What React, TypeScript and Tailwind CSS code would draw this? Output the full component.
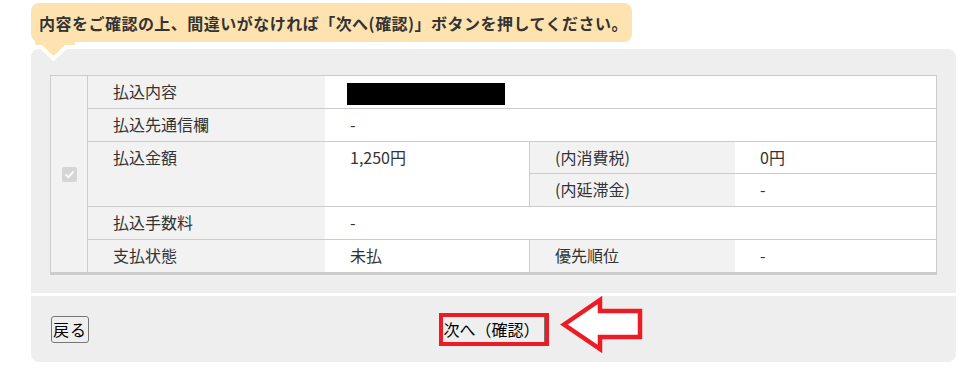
import React from "react";

const font = { fontFamily: '"Noto Sans CJK JP", "Noto Sans", sans-serif' };

function Label({ children, className = "" }: { children: React.ReactNode; className?: string }) {
  return (
    <div className={`bg-[#f2f2f2] pl-[25px] leading-[30px] border-[#cccccc] ${className}`}>{children}</div>
  );
}

function Value({ children, className = "" }: { children: React.ReactNode; className?: string }) {
  return <div className={`bg-white pl-[25px] leading-[30px] border-[#cccccc] ${className}`}>{children}</div>;
}

export default function App() {
  return (
    <div className="w-[971px] h-[377px] bg-white text-[#333333] text-[16px]" style={font}>
      <div className="ml-[31px] pt-[3px] w-[925px]">
        {/* speech bubble */}
        <div className="relative z-10 w-[601px] h-[39px] rounded-[8px] bg-[#fee3b1] flex items-center pl-[8px] font-bold text-[16px] tracking-[0.03em] whitespace-nowrap">
          内容をご確認の上、間違いがなければ「次へ(確認)」ボタンを押してください。
          <svg
            className="absolute left-[4px] top-[36px]"
            width="40"
            height="30"
            viewBox="0 0 40 30"
          >
            <polygon
              points="6,5 31,5 18.5,17"
              fill="#fee3b1"
              stroke="#ffffff"
              strokeWidth="8"
              strokeLinejoin="miter"
              paintOrder="stroke"
            />
            <rect x="0" y="0" width="40" height="6" fill="#fee3b1" />
          </svg>
        </div>

        {/* panel */}
        <div className="mt-[7px]">
          <div className="bg-[#eeeeee] rounded-t-[8px] pt-[26px] px-[19px] pb-[18px]">
            <div className="grid grid-cols-[37px_237px_205px_205px_1fr] grid-rows-[33px_33px_32px_33px_33px_32px] border border-b-[3px] border-[#cccccc] bg-white">
              {/* checkbox column */}
              <div className="row-span-6 bg-[#f2f2f2] border-r border-[#cccccc] flex items-center justify-center">
                <div className="w-[15px] h-[15px] rounded-[2px] bg-[#d5d5d5] flex items-center justify-center">
                  <svg width="11" height="11" viewBox="0 0 12 12">
                    <path d="M2.2 6.3 L4.9 9 L9.8 3.2" fill="none" stroke="#ffffff" strokeWidth="2" strokeLinecap="round" strokeLinejoin="round" />
                  </svg>
                </div>
              </div>

              {/* row 1 */}
              <Label className="border-b">払込内容</Label>
              <div className="col-span-3 bg-white border-b border-[#cccccc] pl-[22px] pt-[7px]">
                <div className="w-[158px] h-[22px] bg-black" />
              </div>

              {/* row 2 */}
              <Label className="border-b">払込先通信欄</Label>
              <Value className="col-span-3 border-b">-</Value>

              {/* row 3 */}
              <Label className="row-span-2 border-b">払込金額</Label>
              <Value className="row-span-2 border-b border-r">1,250円</Value>
              <Label className="border-b pl-[24px]">(内消費税)</Label>
              <Value className="border-b">0円</Value>
              <Label className="border-b pl-[24px]">(内延滞金)</Label>
              <Value className="border-b">-</Value>

              {/* row 4 */}
              <Label className="border-b">払込手数料</Label>
              <Value className="col-span-3 border-b">-</Value>

              {/* row 5 */}
              <Label>支払状態</Label>
              <Value className="border-r">未払</Value>
              <Label className="pl-[24px]">優先順位</Label>
              <Value>-</Value>
            </div>
          </div>
          <div className="h-[3px] bg-white" />
          <div className="bg-[#eeeeee] rounded-b-[8px] h-[66px] px-[20px] grid grid-cols-[1fr_auto_1fr] items-center">
            <div className="flex items-center">
              <button className="w-[38px] h-[27px] border border-[#767676] rounded-[3px] bg-[#efefef] text-black text-[16px] leading-none flex items-center justify-center whitespace-nowrap p-0 tracking-[1px]">
                戻る
              </button>
            </div>
            <div className="relative">
              <div className="w-[110px] h-[33px] border-[4px] border-[#ed1c24] flex">
                <button className="flex-1 bg-[#efefef] border-r border-[#767676] text-black text-[16px] leading-none text-left pl-[1px] whitespace-nowrap">
                  次へ（確認）
                </button>
              </div>
              <svg
                className="absolute left-full ml-[8px] top-[-19px]"
                width="90"
                height="62"
                viewBox="0 0 90 62"
              >
                <polygon
                  points="7,30.5 43,6 43,17 83,17 83,43 43,43 43,55"
                  fill="#ffffff"
                  stroke="#ed1c24"
                  strokeWidth="4.5"
                  strokeLinejoin="miter"
                />
              </svg>
            </div>
            <div />
          </div>
        </div>
      </div>
    </div>
  );
}
